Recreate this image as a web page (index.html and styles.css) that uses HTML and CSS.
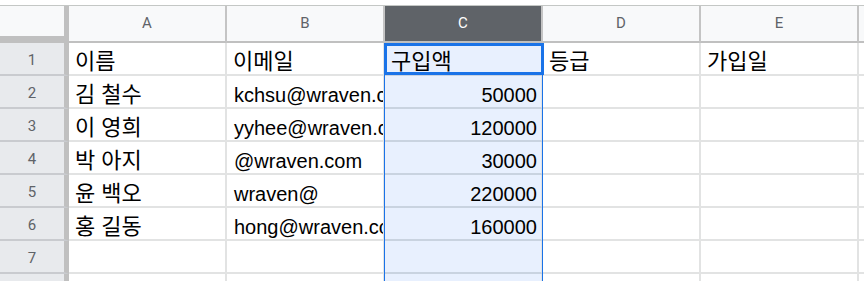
FILE: index.html
```html
<!DOCTYPE html>
<html lang="ko">
<head>
<meta charset="utf-8">
<title>Sheet</title>
<link rel="stylesheet" href="styles.css">
</head>
<body>
<div class="sheet">
  <div class="grid">
    <div class="corner"></div>
    <div class="colhead">A</div>
    <div class="colhead">B</div>
    <div class="colhead sel">C</div>
    <div class="colhead">D</div>
    <div class="colhead">E</div>
    <div class="colhead filler"></div>

    <div class="rowhead">1</div>
    <div class="cell ko">이름</div>
    <div class="cell ko">이메일</div>
    <div class="cell ko csel">구입액</div>
    <div class="cell ko">등급</div>
    <div class="cell ko">가입일</div>
    <div class="cell filler"></div>

    <div class="rowhead">2</div>
    <div class="cell ko">김 철수</div>
    <div class="cell">kchsu@wraven.com</div>
    <div class="cell csel num">50000</div>
    <div class="cell"></div>
    <div class="cell"></div>
    <div class="cell filler"></div>

    <div class="rowhead">3</div>
    <div class="cell ko">이 영희</div>
    <div class="cell">yyhee@wraven.com</div>
    <div class="cell csel num">120000</div>
    <div class="cell"></div>
    <div class="cell"></div>
    <div class="cell filler"></div>

    <div class="rowhead">4</div>
    <div class="cell ko">박 아지</div>
    <div class="cell">@wraven.com</div>
    <div class="cell csel num">30000</div>
    <div class="cell"></div>
    <div class="cell"></div>
    <div class="cell filler"></div>

    <div class="rowhead">5</div>
    <div class="cell ko">윤 백오</div>
    <div class="cell">wraven@</div>
    <div class="cell csel num">220000</div>
    <div class="cell"></div>
    <div class="cell"></div>
    <div class="cell filler"></div>

    <div class="rowhead">6</div>
    <div class="cell ko">홍 길동</div>
    <div class="cell">hong@wraven.com</div>
    <div class="cell csel num">160000</div>
    <div class="cell"></div>
    <div class="cell"></div>
    <div class="cell filler"></div>

    <div class="rowhead">7</div>
    <div class="cell"></div>
    <div class="cell"></div>
    <div class="cell csel"></div>
    <div class="cell"></div>
    <div class="cell"></div>
    <div class="cell filler"></div>

    <div class="rowhead">8</div>
    <div class="cell"></div>
    <div class="cell"></div>
    <div class="cell csel"></div>
    <div class="cell"></div>
    <div class="cell"></div>
    <div class="cell filler"></div>

    <div class="colsel"></div>
    <div class="active"></div>
  </div>
</div>
</body>
</html>
```

FILE: styles.css
```css
html, body {
  margin: 0;
  padding: 0;
  background: #ffffff;
  overflow: hidden;
}

.sheet {
  width: 864px;
  height: 281px;
  overflow: hidden;
  padding-top: 5px;
  box-sizing: border-box;
}

.grid {
  position: relative;
  display: grid;
  grid-template-columns: 69px 158px 158px 158px 158px 158px 1fr;
  grid-template-rows: 37px repeat(8, 33px);
  border-top: 1px solid #c4c7c5;
}

.corner {
  background: #f8f9fa;
  border-right: 5px solid #c0c0c0;
  border-bottom: 7px solid #c0c0c0;
}

.colhead {
  background: #f8f9fa;
  border-right: 2px solid #c4c4c4;
  border-bottom: 2px solid #c0c0c0;
  display: flex;
  align-items: center;
  justify-content: center;
  font-family: Roboto, "Liberation Sans", sans-serif;
  font-size: 15px;
  color: #5f6368;
  padding-bottom: 1px;
}

.colhead.sel {
  background: #5f6368;
  color: #ffffff;
}

.colhead.filler {
  border-right: none;
}

.rowhead {
  background: #e8eaed;
  border-right: 5px solid #c0c0c0;
  border-bottom: 2px solid #c9cbcf;
  display: flex;
  align-items: center;
  justify-content: center;
  font-family: Roboto, "Liberation Sans", sans-serif;
  font-size: 15px;
  color: #5f6368;
  padding-top: 2px;
}

.cell {
  border-right: 2px solid #e2e3e3;
  border-bottom: 2px solid #e2e3e3;
  display: flex;
  align-items: flex-end;
  padding: 0 0 0 7px;
  overflow: hidden;
  white-space: nowrap;
  font-family: "Liberation Sans", "Noto Sans CJK KR", Arial, sans-serif;
  font-size: 20px;
  line-height: 24px;
  color: #000000;
}

.cell.ko {
  font-size: 22px;
  padding-left: 6px;
}

.cell.csel {
  background: #e8f0fe;
  border-bottom-color: #c9d3e0;
}

.cell.num {
  justify-content: flex-end;
  padding-right: 4px;
}

.cell.filler {
  border-right: none;
}

.colsel {
  position: absolute;
  left: 384px;
  top: 37px;
  width: 159px;
  bottom: 0;
  box-sizing: border-box;
  border-left: 1px solid #1a73e8;
  border-right: 1px solid #1a73e8;
  pointer-events: none;
}

.active {
  position: absolute;
  left: 384px;
  top: 37px;
  width: 160px;
  height: 32px;
  box-sizing: border-box;
  border: 3px solid #1a73e8;
  pointer-events: none;
}
```
